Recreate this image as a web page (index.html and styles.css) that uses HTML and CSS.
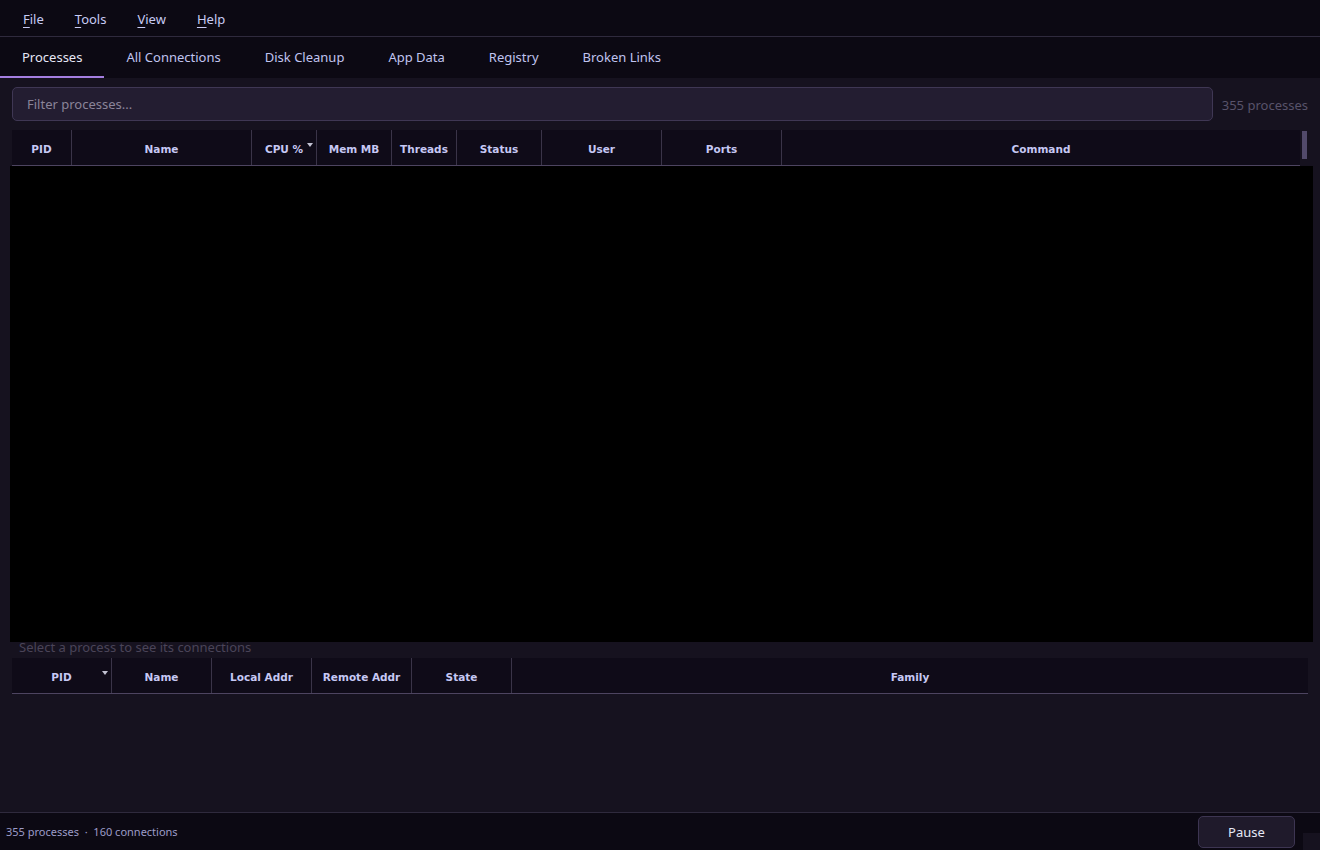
FILE: index.html
```html
<!DOCTYPE html>
<html lang="en">
<head>
    <meta charset="UTF-8">
    <title>Process Monitor</title>
    <link rel="stylesheet" href="styles.css">
</head>
<body>
    <div class="menubar">
        <span class="menu-item"><u>F</u>ile</span>
        <span class="menu-item"><u>T</u>ools</span>
        <span class="menu-item"><u>V</u>iew</span>
        <span class="menu-item"><u>H</u>elp</span>
    </div>

    <div class="tabbar">
        <span class="tab active">Processes</span>
        <span class="tab">All Connections</span>
        <span class="tab">Disk Cleanup</span>
        <span class="tab">App Data</span>
        <span class="tab">Registry</span>
        <span class="tab">Broken Links</span>
    </div>

    <div class="main">
        <div class="filter-row">
            <input class="filter" type="text" placeholder="Filter processes...">
            <span class="count">355 processes</span>
        </div>

        <div class="proc-table">
            <div class="thead">
                <div class="th" style="width: 60px">PID</div>
                <div class="th" style="width: 180px">Name</div>
                <div class="th sorted" style="width: 65px">CPU %</div>
                <div class="th" style="width: 75px">Mem MB</div>
                <div class="th" style="width: 65px">Threads</div>
                <div class="th" style="width: 85px">Status</div>
                <div class="th" style="width: 120px">User</div>
                <div class="th" style="width: 120px">Ports</div>
                <div class="th grow">Command</div>
                <div class="scroll"><div class="thumb"></div></div>
            </div>
            <div class="tbody"></div>
        </div>

        <div class="hint">Select a process to see its connections</div>

        <div class="conn-table">
            <div class="thead">
                <div class="th sorted" style="width: 100px">PID</div>
                <div class="th" style="width: 100px">Name</div>
                <div class="th" style="width: 100px">Local Addr</div>
                <div class="th" style="width: 100px">Remote Addr</div>
                <div class="th" style="width: 100px">State</div>
                <div class="th grow">Family</div>
            </div>
        </div>
    </div>

    <div class="statusbar">
        <span class="status-text">355 processes &nbsp;·&nbsp; 160 connections</span>
        <button class="pause">Pause</button>
        <div class="grip"></div>
    </div>
</body>
</html>
```

FILE: styles.css
```css
* {
    box-sizing: border-box;
}

body {
    margin: 0;
    height: 850px;
    display: flex;
    flex-direction: column;
    background-color: #16121f;
    font-family: 'Noto Sans', 'Open Sans', sans-serif;
    color: #c4c6f2;
    overflow: hidden;
}

.menubar {
    height: 37px;
    display: flex;
    align-items: center;
    padding: 2px 0 0 7px;
    background-color: #0c0913;
    border-bottom: 1px solid #2f2a3d;
}

.menu-item {
    padding: 0 15px 0 16px;
    font-size: 13px;
    color: #c8cbf4;
}

.menu-item u {
    text-underline-offset: 3px;
}

.tabbar {
    height: 41px;
    display: flex;
    background-color: #0c0913;
}

.tab {
    display: flex;
    align-items: center;
    padding: 0 22px;
    font-size: 13px;
    color: #c0c4f0;
    border-bottom: 2px solid transparent;
}

.tab.active {
    color: #e6e6f6;
    border-bottom-color: #a47ee0;
}

.main {
    flex: 1;
    display: flex;
    flex-direction: column;
    padding: 9px 7px 0 10px;
}

.filter-row {
    display: flex;
    align-items: center;
    gap: 9px;
    margin: 0 5px 0 2px;
}

.filter {
    flex: 1;
    height: 34px;
    padding: 0 14px;
    background-color: #231d31;
    border: 1px solid #3f3754;
    border-radius: 5px;
    font-family: 'Noto Sans', 'Open Sans', sans-serif;
    font-size: 13px;
    color: #d0d0e8;
    outline: none;
}

.filter::placeholder {
    color: #8a8499;
}

.count {
    font-size: 13px;
    color: #58526a;
    padding-top: 2px;
}

.proc-table {
    margin-top: 9px;
    display: flex;
    flex-direction: column;
}

.thead {
    height: 36px;
    display: flex;
    background-color: #0f0b18;
    border-bottom: 1px solid #4d4460;
}

.proc-table .thead {
    margin-left: 2px;
    margin-right: 13px;
    position: relative;
}

.th {
    position: relative;
    display: flex;
    align-items: center;
    justify-content: center;
    font-family: 'DejaVu Sans', sans-serif;
    font-weight: bold;
    font-size: 10.5px;
    color: #c6c8f4;
    border-right: 1px solid #3a3448;
    padding-top: 2px;
}

.th.grow {
    flex: 1;
    border-right: none;
}

.th.sorted::after {
    content: "";
    position: absolute;
    right: 3px;
    top: 13px;
    border-left: 3.5px solid transparent;
    border-right: 3.5px solid transparent;
    border-top: 4px solid #c2c2d2;
}

.scroll {
    position: absolute;
    right: -13px;
    top: 0;
    width: 13px;
    height: 36px;
    background-color: #16121f;
}

.thumb {
    margin: 1px 0 0 2px;
    width: 5px;
    height: 28px;
    background-color: #524a6a;
}

.tbody {
    height: 476px;
    background-color: #000;
}

.hint {
    margin-left: 9px;
    height: 15px;
    font-size: 13px;
    line-height: 11px;
    color: #4a4458;
}

.conn-table {
    margin: 1px 5px 0 2px;
}

.statusbar {
    height: 38px;
    display: flex;
    align-items: center;
    padding-left: 6px;
    background-color: #0c0913;
    border-top: 1px solid #2f2a3d;
}

.status-text {
    flex: 1;
    font-size: 11px;
    color: #9c9cc8;
}

.pause {
    width: 97px;
    height: 32px;
    background-color: #1f1a2b;
    border: 1px solid #3d3552;
    border-radius: 5px;
    font-family: 'Noto Sans', 'Open Sans', sans-serif;
    font-size: 13px;
    color: #e6e8f6;
}

.grip {
    align-self: flex-end;
    margin-left: 8px;
    width: 17px;
    height: 17px;
    background-color: #16121f;
}
```
